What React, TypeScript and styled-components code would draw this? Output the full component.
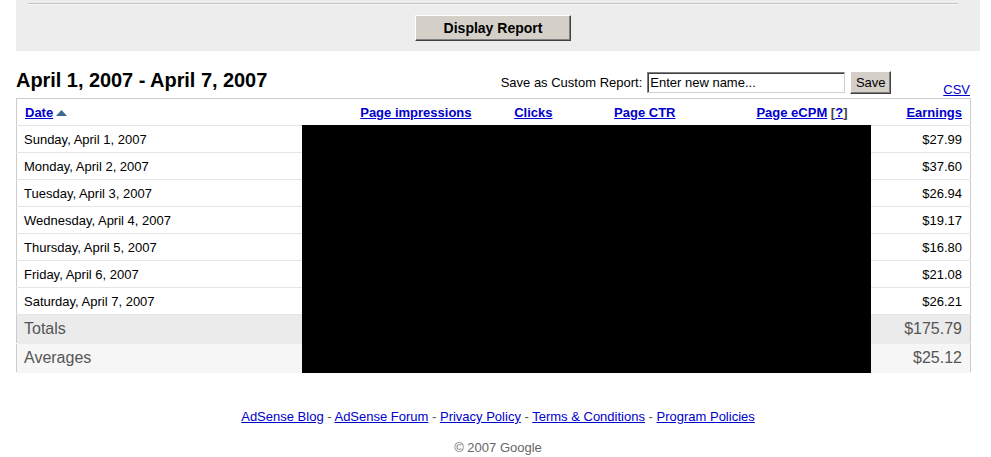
import React from 'react';
import styled, { createGlobalStyle } from 'styled-components';

const GlobalStyle = createGlobalStyle`
  body {
    margin: 0;
    background: #ffffff;
    font-family: "Liberation Sans", Arial, sans-serif;
    color: #000;
  }
`;

const days = [
  { date: 'Sunday, April 1, 2007', earnings: '$27.99' },
  { date: 'Monday, April 2, 2007', earnings: '$37.60' },
  { date: 'Tuesday, April 3, 2007', earnings: '$26.94' },
  { date: 'Wednesday, April 4, 2007', earnings: '$19.17' },
  { date: 'Thursday, April 5, 2007', earnings: '$16.80' },
  { date: 'Friday, April 6, 2007', earnings: '$21.08' },
  { date: 'Saturday, April 7, 2007', earnings: '$26.21' },
];

const footerLinks = ['AdSense Blog', 'AdSense Forum', 'Privacy Policy', 'Terms & Conditions', 'Program Policies'];

const Page = styled.div`
  padding: 0 11px 0 16px;
  width: 964px;
`;

const FilterPanel = styled.div`
  width: 964px;
  height: 51px;
  background: #ededed;
  display: flex;
  flex-direction: column;
  align-items: center;
`;

const Rule = styled.div`
  align-self: stretch;
  margin: 3px 22px 0 12px;
  height: 1px;
  background: #c4c4c4;
  border-bottom: 1px solid #f8f8f8;
`;

const ClassicButton = styled.button<{ $bold?: boolean }>`
  background: #d4d0c8;
  font-family: "Liberation Sans", Arial, sans-serif;
  font-size: ${(p) => (p.$bold ? '14px' : '13px')};
  font-weight: ${(p) => (p.$bold ? 'bold' : 'normal')};
  color: #000;
  border: 1px solid;
  border-color: #ffffff #404040 #404040 #ffffff;
  box-shadow: inset -1px -1px 0 #808080;
  padding: 0;
  cursor: pointer;
`;

const DisplayButton = styled(ClassicButton)`
  margin: 10px 10px 0 0;
  width: 156px;
  height: 26px;
`;

const HeadingRow = styled.div`
  display: flex;
  align-items: flex-end;
  width: 954px;
  margin-top: 18px;
  height: 29px;
`;

const Title = styled.h1`
  margin: 0 0 7px 0;
  font-size: 20px;
  font-weight: bold;
  line-height: 22px;
  letter-spacing: -0.05px;
  flex: 1;
`;

const SaveForm = styled.form`
  display: flex;
  align-items: center;
  gap: 5px;
  font-size: 13px;
  margin-bottom: 4px;
`;

const NameInput = styled.input`
  width: 192px;
  height: 17px;
  padding: 1px 2px;
  font-family: "Liberation Sans", Arial, sans-serif;
  font-size: 13px;
  color: #000;
  border: 1px solid;
  border-color: #7f7f7f #d4d0c8 #d4d0c8 #7f7f7f;
  box-shadow: inset 1px 1px 0 #404040;
  &::placeholder {
    color: #000;
  }
`;

const SaveButton = styled(ClassicButton)`
  width: 41px;
  height: 23px;
`;

const CsvLink = styled.a`
  margin-left: 52px;
  margin-bottom: 1px;
  font-size: 13px;
  color: #0000cc;
  text-decoration: underline;
`;

const TableWrap = styled.div`
  position: relative;
  width: 954px;
`;

const Report = styled.table`
  width: 954px;
  border-collapse: collapse;
  table-layout: fixed;
  border: 1px solid #cccccc;
`;

const HeadCell = styled.th<{ $align?: string }>`
  height: 26px;
  padding: 0 8px;
  text-align: ${(p) => p.$align || 'right'};
  font-size: 13px;
  font-weight: bold;
  border-bottom: 1px solid #e5e5e5;
  vertical-align: middle;
`;

const SortLink = styled.a`
  color: #0000cc;
  text-decoration: underline;
`;

const Bracket = styled.span`
  color: #444;
`;

const Row = styled.tr<{ $tone?: 'total' | 'average' }>`
  background: ${(p) => (p.$tone === 'total' ? '#ebebeb' : p.$tone === 'average' ? '#f6f6f6' : '#ffffff')};
`;

const Cell = styled.td<{ $big?: boolean; $right?: boolean }>`
  height: ${(p) => (p.$big ? '28px' : '26px')};
  padding: 0 8px 0 ${(p) => (p.$right ? '8px' : '7px')};
  font-size: ${(p) => (p.$big ? '16px' : '13px')};
  color: ${(p) => (p.$big ? '#555555' : '#000000')};
  text-align: ${(p) => (p.$right ? 'right' : 'left')};
  border-bottom: 1px solid ${(p) => (p.$big ? 'transparent' : '#e5e5e5')};
  white-space: nowrap;
`;

const Redaction = styled.div`
  position: absolute;
  left: 286px;
  top: 27px;
  width: 569px;
  bottom: 0;
  background: #000;
`;

const Footer = styled.div`
  margin-top: 36px;
  text-align: center;
  font-size: 13px;
  color: #555;
`;

const FooterLink = styled.a`
  color: #0000cc;
  text-decoration: underline;
`;

const Copyright = styled.div`
  margin-top: 16px;
  font-size: 13px;
  color: #666;
`;

const SortArrow = () => (
  <svg width="11" height="6" viewBox="0 0 11 6" style={{ marginLeft: 3, verticalAlign: 1 }}>
    <polygon points="0,6 5.5,0 11,6" fill="#3e6a8e" />
  </svg>
);

export default function App() {
  return (
    <>
      <GlobalStyle />
      <Page>
        <FilterPanel>
          <Rule />
          <DisplayButton $bold type="button">Display Report</DisplayButton>
        </FilterPanel>

        <HeadingRow>
          <Title>April 1, 2007 - April 7, 2007</Title>
          <SaveForm onSubmit={(e) => e.preventDefault()}>
            <span>Save as Custom Report:</span>
            <NameInput placeholder="Enter new name..." />
            <SaveButton type="submit">Save</SaveButton>
          </SaveForm>
          <CsvLink href="#">CSV</CsvLink>
        </HeadingRow>

        <TableWrap>
          <Report>
            <colgroup>
              <col style={{ width: 286 }} />
              <col style={{ width: 177 }} />
              <col style={{ width: 81 }} />
              <col style={{ width: 123 }} />
              <col style={{ width: 172 }} />
              <col style={{ width: 115 }} />
            </colgroup>
            <thead>
              <tr>
                <HeadCell $align="left">
                  <SortLink href="#">Date</SortLink>
                  <SortArrow />
                </HeadCell>
                <HeadCell><SortLink href="#">Page impressions</SortLink></HeadCell>
                <HeadCell><SortLink href="#">Clicks</SortLink></HeadCell>
                <HeadCell><SortLink href="#">Page CTR</SortLink></HeadCell>
                <HeadCell>
                  <SortLink href="#">Page eCPM</SortLink> <Bracket>[</Bracket>
                  <SortLink href="#">?</SortLink>
                  <Bracket>]</Bracket>
                </HeadCell>
                <HeadCell><SortLink href="#">Earnings</SortLink></HeadCell>
              </tr>
            </thead>
            <tbody>
              {days.map((d) => (
                <Row key={d.date}>
                  <Cell>{d.date}</Cell>
                  <Cell />
                  <Cell />
                  <Cell />
                  <Cell />
                  <Cell $right>{d.earnings}</Cell>
                </Row>
              ))}
              <Row $tone="total">
                <Cell $big>Totals</Cell>
                <Cell $big />
                <Cell $big />
                <Cell $big />
                <Cell $big />
                <Cell $big $right>$175.79</Cell>
              </Row>
              <Row $tone="average">
                <Cell $big>Averages</Cell>
                <Cell $big />
                <Cell $big />
                <Cell $big />
                <Cell $big />
                <Cell $big $right>$25.12</Cell>
              </Row>
            </tbody>
          </Report>
          <Redaction />
        </TableWrap>

        <Footer>
          <div>
            {footerLinks.map((l, i) => (
              <React.Fragment key={l}>
                {i > 0 && ' - '}
                <FooterLink href="#">{l}</FooterLink>
              </React.Fragment>
            ))}
          </div>
          <Copyright>© 2007 Google</Copyright>
        </Footer>
      </Page>
    </>
  );
}
